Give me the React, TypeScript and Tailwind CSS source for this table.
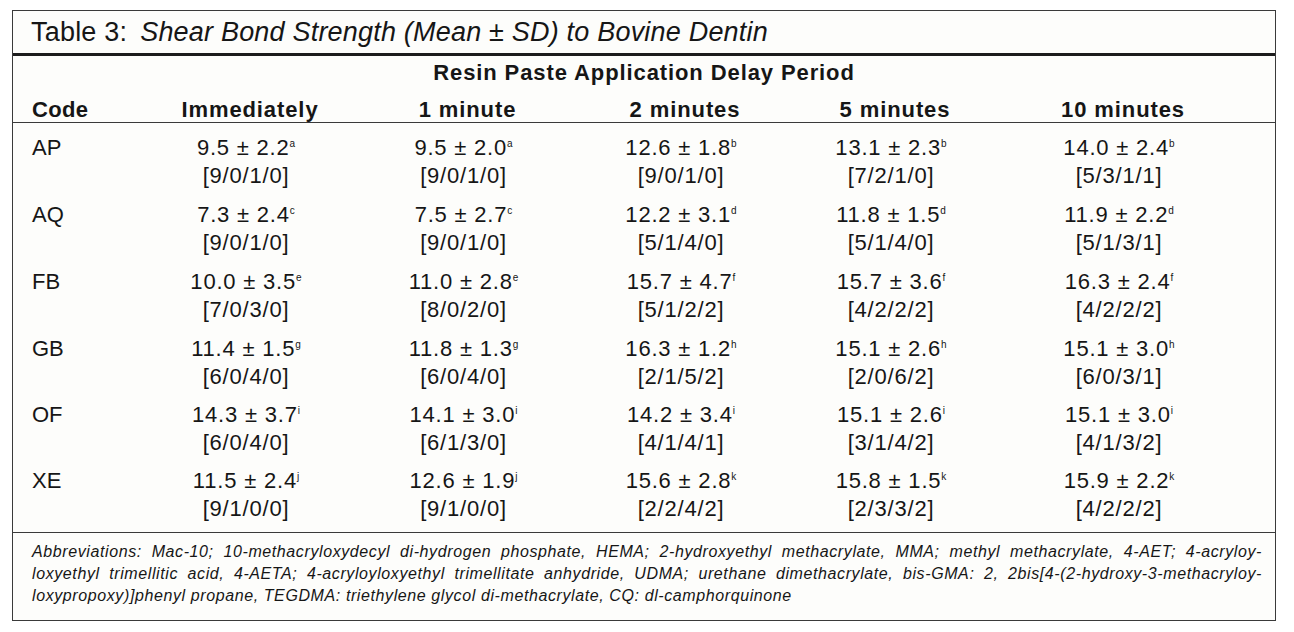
import React from "react";

type Cell = { v: string; s: string; n: string };

const rows: { code: string; cells: Cell[] }[] = [
  {
    code: "AP",
    cells: [
      { v: "9.5 ± 2.2", s: "a", n: "[9/0/1/0]" },
      { v: "9.5 ± 2.0", s: "a", n: "[9/0/1/0]" },
      { v: "12.6 ± 1.8", s: "b", n: "[9/0/1/0]" },
      { v: "13.1 ± 2.3", s: "b", n: "[7/2/1/0]" },
      { v: "14.0 ± 2.4", s: "b", n: "[5/3/1/1]" },
    ],
  },
  {
    code: "AQ",
    cells: [
      { v: "7.3 ± 2.4", s: "c", n: "[9/0/1/0]" },
      { v: "7.5 ± 2.7", s: "c", n: "[9/0/1/0]" },
      { v: "12.2 ± 3.1", s: "d", n: "[5/1/4/0]" },
      { v: "11.8 ± 1.5", s: "d", n: "[5/1/4/0]" },
      { v: "11.9 ± 2.2", s: "d", n: "[5/1/3/1]" },
    ],
  },
  {
    code: "FB",
    cells: [
      { v: "10.0 ± 3.5", s: "e", n: "[7/0/3/0]" },
      { v: "11.0 ± 2.8", s: "e", n: "[8/0/2/0]" },
      { v: "15.7 ± 4.7", s: "f", n: "[5/1/2/2]" },
      { v: "15.7 ± 3.6", s: "f", n: "[4/2/2/2]" },
      { v: "16.3 ± 2.4", s: "f", n: "[4/2/2/2]" },
    ],
  },
  {
    code: "GB",
    cells: [
      { v: "11.4 ± 1.5", s: "g", n: "[6/0/4/0]" },
      { v: "11.8 ± 1.3", s: "g", n: "[6/0/4/0]" },
      { v: "16.3 ± 1.2", s: "h", n: "[2/1/5/2]" },
      { v: "15.1 ± 2.6", s: "h", n: "[2/0/6/2]" },
      { v: "15.1 ± 3.0", s: "h", n: "[6/0/3/1]" },
    ],
  },
  {
    code: "OF",
    cells: [
      { v: "14.3 ± 3.7", s: "i", n: "[6/0/4/0]" },
      { v: "14.1 ± 3.0", s: "i", n: "[6/1/3/0]" },
      { v: "14.2 ± 3.4", s: "i", n: "[4/1/4/1]" },
      { v: "15.1 ± 2.6", s: "i", n: "[3/1/4/2]" },
      { v: "15.1 ± 3.0", s: "i", n: "[4/1/3/2]" },
    ],
  },
  {
    code: "XE",
    cells: [
      { v: "11.5 ± 2.4", s: "j", n: "[9/1/0/0]" },
      { v: "12.6 ± 1.9", s: "j", n: "[9/1/0/0]" },
      { v: "15.6 ± 2.8", s: "k", n: "[2/2/4/2]" },
      { v: "15.8 ± 1.5", s: "k", n: "[2/3/3/2]" },
      { v: "15.9 ± 2.2", s: "k", n: "[4/2/2/2]" },
    ],
  },
];

const heads = ["Immediately", "1 minute", "2 minutes", "5 minutes", "10 minutes"];

// row heights taken from the spacing between data rows
const rowH = ["h-[67px]", "h-[67px]", "h-[67px]", "h-[66px]", "h-[66px]", "h-[76px]"];

const grid = "grid grid-cols-[127px_220px_215px_220px_200px_256px_1fr]";

export default function App() {
  return (
    <div className="min-h-screen bg-white pl-[12px] pt-[10px] font-['Liberation_Sans',Arial,sans-serif] text-[#161616]">
      <div className="w-[1264px] border border-[#3a3a3a] bg-[#fdfdfb]">
        {/* Titel */}
        <div className="flex h-[42px] items-center pl-[18px] text-[27px] leading-none tracking-[0.2px]">
          <span>Table 3:</span>
          <span className="ml-[13px] italic">Shear Bond Strength (Mean ± SD) to Bovine Dentin</span>
        </div>
        <div className="h-[3px] bg-[#1c1c1c]" />

        {/* Kopf */}
        <div className="border-b border-[#3a3a3a] pt-[5px]">
          <div className="text-center text-[22px] font-bold leading-[24px] tracking-[0.9px]">
            Resin Paste Application Delay Period
          </div>
          <div className={`${grid} mt-[13px] text-[22px] font-bold leading-[24px] tracking-[0.9px]`}>
            <div className="pl-[19px] tracking-[0.3px]">Code</div>
            {heads.map((h) => (
              <div key={h} className="text-center">
                {h}
              </div>
            ))}
            <div />
          </div>
        </div>

        {/* Daten */}
        <div className="text-[22px] leading-[28px] tracking-[0.8px]">
          {rows.map((r, i) => (
            <div key={r.code} className={`${grid} ${rowH[i]} pt-[11px]`}>
              <div className="pl-[19px] tracking-normal">{r.code}</div>
              {r.cells.map((c, j) => (
                <div key={j} className="flex flex-col items-center pr-[8px]">
                  <div>
                    {c.v}
                    <span className="relative -top-[8px] text-[10px] leading-none tracking-normal">{c.s}</span>
                  </div>
                  <div>{c.n}</div>
                </div>
              ))}
              <div />
            </div>
          ))}
        </div>

        {/* Fussnote */}
        <div className="border-t border-[#3a3a3a] pb-[13px] pl-[19px] pr-[13px] pt-[8px] text-[16px] italic leading-[22px] tracking-[0.6px]">
          <div className="text-justify [text-align-last:justify]">
            Abbreviations: Mac-10; 10-methacryloxydecyl di-hydrogen phosphate, HEMA; 2-hydroxyethyl methacrylate, MMA; methyl methacrylate, 4-AET; 4-acryloy-
          </div>
          <div className="text-justify [text-align-last:justify]">
            loxyethyl trimellitic acid, 4-AETA; 4-acryloyloxyethyl trimellitate anhydride, UDMA; urethane dimethacrylate, bis-GMA: 2, 2bis[4-(2-hydroxy-3-methacryloy-
          </div>
          <div>loxypropoxy)]phenyl propane, TEGDMA: triethylene glycol di-methacrylate, CQ: dl-camphorquinone</div>
        </div>
      </div>
    </div>
  );
}
